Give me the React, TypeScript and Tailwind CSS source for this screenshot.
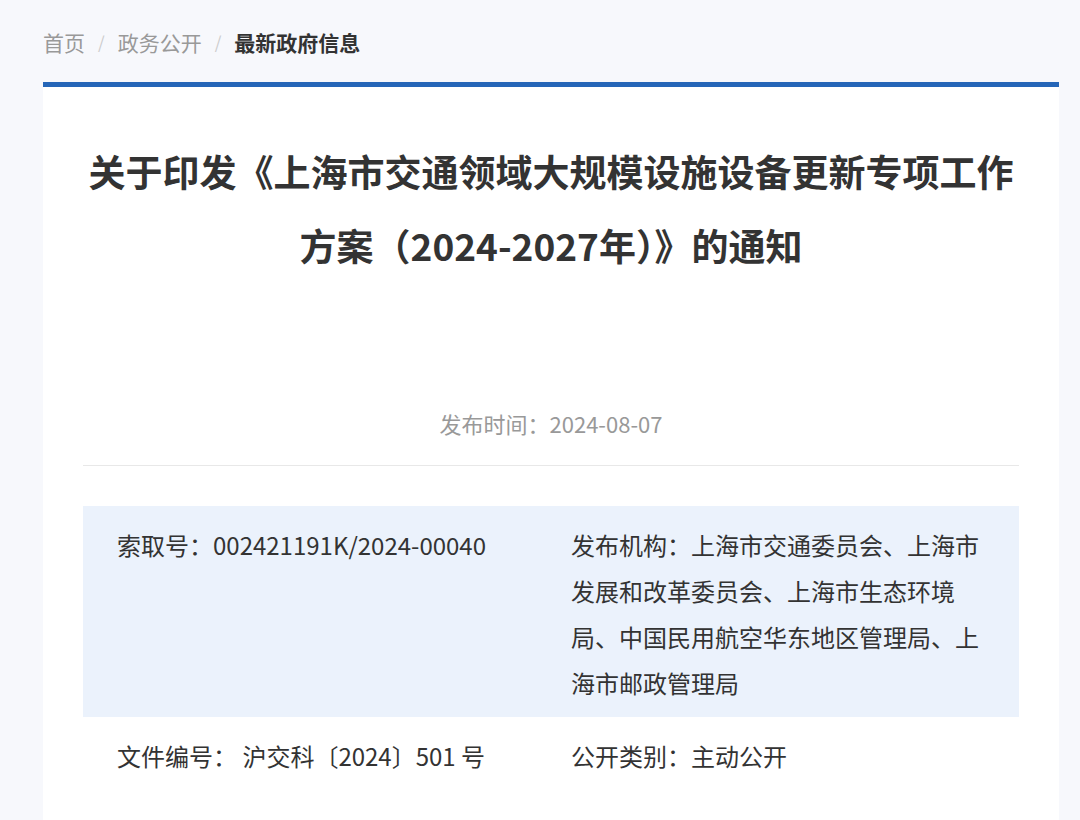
const font = { fontFamily: '"Noto Sans CJK SC", "Noto Sans", sans-serif' };

const crumbs = ["首页", "政务公开"];

export default function App() {
  return (
    <div style={font} className="min-h-[820px] bg-[#f7f8fc] pl-[43px] pr-[21px] pb-10 text-[#333]">
      <nav className="flex items-center pt-[27px] pb-[25px] text-[21px] leading-[30px]">
        {crumbs.map((c) => (
          <span key={c} className="flex items-center">
            <span className="text-[#999]">{c}</span>
            <span className="mx-[13px] text-[17px] text-[#ccc]">/</span>
          </span>
        ))}
        <span className="font-bold text-[#333]">最新政府信息</span>
      </nav>

      <article className="min-h-[800px] border-t-[5px] border-[#2566b8] bg-white px-[40px]">
        <h1 className="pt-[47px] text-center text-[37px] font-bold leading-[74px] text-[#333]">
          关于印发《上海市交通领域大规模设施设备更新专项工作方案（2024-2027年）》的通知
        </h1>

        <p className="mt-[126px] text-center text-[22px] leading-[30px] text-[#999]">
          发布时间：2024-08-07
        </p>
        <div className="mt-[27px] border-t border-[#e8e8e8]" />

        <div className="mt-[40px] text-[24px] leading-[46px] text-[#333]">
          <div className="grid grid-cols-[454px_1fr] bg-[#ebf2fc] pt-[16px] pb-[11px] pl-[34px] pr-[34px]">
            <div>索取号：002421191K/2024-00040</div>
            <div>发布机构：上海市交通委员会、上海市发展和改革委员会、上海市生态环境局、中国民用航空华东地区管理局、上海市邮政管理局</div>
          </div>
          <div className="grid grid-cols-[454px_1fr] pt-[16px] pb-[11px] pl-[34px] pr-[34px]">
            <div>文件编号： 沪交科〔2024〕501 号</div>
            <div>公开类别：主动公开</div>
          </div>
        </div>
      </article>
    </div>
  );
}
